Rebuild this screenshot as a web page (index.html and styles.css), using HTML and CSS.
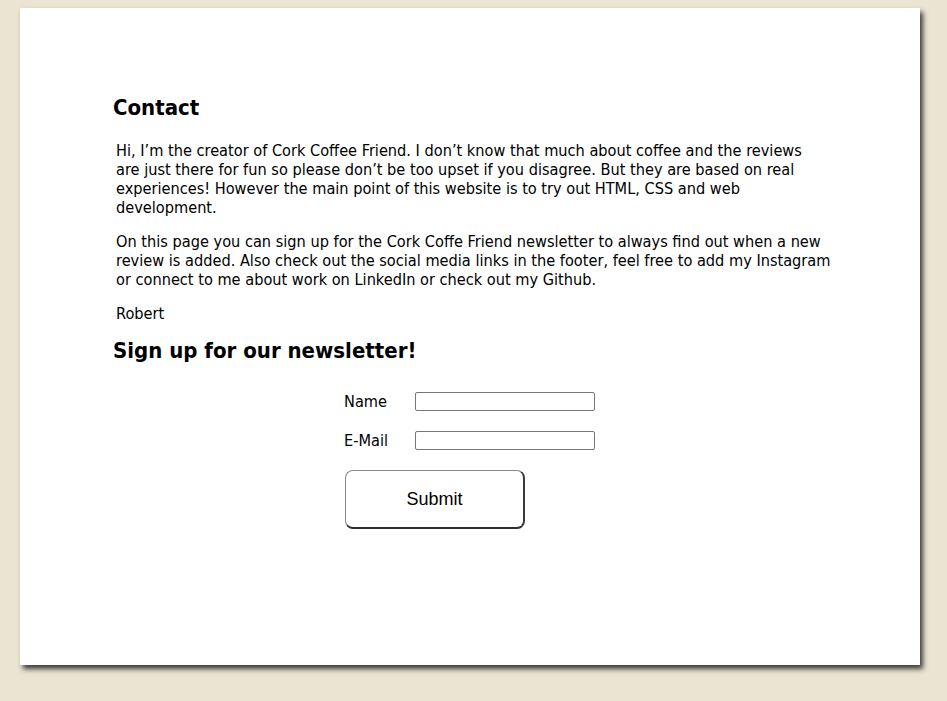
FILE: index.html
```html
<!DOCTYPE html>
<html lang="en">
<head>
<meta charset="utf-8">
<title>Contact - Cork Coffee Friend</title>
<link rel="stylesheet" href="styles.css">
</head>
<body>
<main class="card">
  <h2 class="heading">Contact</h2>
  <p class="text">Hi, I’m the creator of Cork Coffee Friend. I don’t know that much about coffee and the reviews<br>are just there for fun so please don’t be too upset if you disagree. But they are based on real experiences! However the main point of this website is to try out HTML, CSS and web development.</p>
  <p class="text">On this page you can sign up for the Cork Coffe Friend newsletter to always find out when a new review is added. Also check out the social media links in the footer, feel free to add my Instagram or connect to me about work on LinkedIn or check out my Github.</p>
  <p class="text">Robert</p>
  <h2 class="heading">Sign up for our newsletter!</h2>
  <form class="signup">
    <label class="label" for="name">Name</label>
    <input class="field" id="name" type="text">
    <label class="label" for="email">E-Mail</label>
    <input class="field" id="email" type="email">
    <button class="submit" type="button">Submit</button>
  </form>
</main>
</body>
</html>
```
FILE: styles.css
```css
html, body {
  margin: 0;
  padding: 0;
}
body {
  background: #ece4d2;
  padding: 8px 27px 0 20px;
  height: 701px;
  box-sizing: border-box;
  overflow: hidden;
  font-family: "DejaVu Sans Condensed", "DejaVu Sans", sans-serif;
  color: #000;
}
.card {
  display: block;
  width: 900px;
  height: 657px;
  box-sizing: border-box;
  background: #fff;
  padding: 87px 87px 0 93px;
  box-shadow: 3px 4px 5px rgba(30, 30, 30, 0.85);
}
.heading {
  font-size: 22px;
  font-weight: bold;
  line-height: 26px;
  margin: 0 0 20px;
}
.text {
  font-size: 16.2px;
  line-height: 19px;
  margin: 0 0 15px;
  padding-left: 3px;
}
.signup {
  display: grid;
  grid-template-columns: 71px 180px;
  row-gap: 20px;
  align-items: center;
  width: 251px;
  margin: 28px 0 0 231px;
}
.label {
  font-size: 16.2px;
  line-height: 19px;
}
.field {
  width: 180px;
  height: 19px;
  box-sizing: border-box;
  border: 1px solid #767676;
  border-radius: 2px;
  padding: 0 2px;
  margin: 0;
  background: #fff;
}
.submit {
  grid-column: 1 / 3;
  width: 180px;
  height: 59px;
  margin: 0 0 0 1px;
  box-sizing: border-box;
  background: #fff;
  border: 1px solid #8a8a8a;
  border-right: 2px solid #3a3a3a;
  border-bottom: 2px solid #2e2e2e;
  border-radius: 8px;
  font-family: "Liberation Sans", Arial, sans-serif;
  font-size: 18px;
  color: #000;
  padding: 0;
}
```
